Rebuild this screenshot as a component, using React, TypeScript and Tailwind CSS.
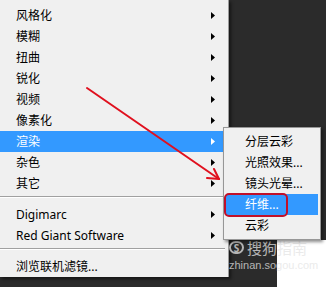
import React from 'react';

type MenuItem = { label: string; sub?: boolean; active?: boolean } | { sep: true };

const mainItems: MenuItem[] = [
  { label: '风格化', sub: true },
  { label: '模糊', sub: true },
  { label: '扭曲', sub: true },
  { label: '锐化', sub: true },
  { label: '视频', sub: true },
  { label: '像素化', sub: true },
  { label: '渲染', sub: true, active: true },
  { label: '杂色', sub: true },
  { label: '其它', sub: true },
  { sep: true },
  { label: 'Digimarc', sub: true },
  { label: 'Red Giant Software', sub: true },
  { sep: true },
  { label: '浏览联机滤镜...' },
];

const subItems = [
  { label: '分层云彩' },
  { label: '光照效果...' },
  { label: '镜头光晕...' },
  { label: '纤维...', active: true },
  { label: '云彩' },
];

const Caret = ({ white }: { white?: boolean }) => (
  <svg width="4" height="7" viewBox="0 0 4 7" className="shrink-0">
    <path d="M0 0 L4 3.5 L0 7 Z" fill={white ? '#ffffff' : '#000000'} />
  </svg>
);

export default function App() {
  return (
    <div className="relative w-[326px] h-[287px] overflow-hidden bg-[#2b2b2b] font-['Noto_Sans','Noto_Sans_CJK_SC',sans-serif] text-[12px] text-black">
      {/* main filter menu */}
      <div className="w-[229px] h-[277px] bg-[#f0f0f0] border-r border-[#9a9a9a] pt-[5px] flex flex-col shadow-[2px_2px_3px_rgba(0,0,0,0.5)]">
        {mainItems.map((item, i) =>
          'sep' in item ? (
            <div key={i} className="h-[10px] flex items-start pt-[2px] pr-[3px]">
              <div className="w-full border-t border-[#a0a0a0] border-b border-b-white" />
            </div>
          ) : (
            <div
              key={i}
              className={`h-[21px] flex items-center pl-[16px] pr-[10px] mr-[3px] ${
                item.active ? 'bg-[#3399ff] text-white' : ''
              }`}
            >
              <span className="flex-1 leading-none">{item.label}</span>
              {item.sub && <Caret white={item.active} />}
            </div>
          )
        )}
      </div>

      {/* desktop behind, bottom right */}
      <div className="absolute left-[277px] top-[240px] w-[49px] h-[47px] bg-white" />

      {/* watermark */}
      <div className="absolute left-[229px] top-[240px] flex flex-col text-[#e4e4e4]/75">
        <div className="flex items-center gap-[3px]">
          <div className="w-[15px] h-[13px] rounded-full border-2 border-[#e4e4e4]/75 flex items-center justify-center text-[10px] font-bold leading-none">
            S
          </div>
          <span className="text-[15px] leading-none font-['Noto_Sans_CJK_SC',sans-serif]">搜狗指南</span>
        </div>
        <span className="text-[11px] leading-none mt-[5px] font-['Liberation_Sans',sans-serif]">zhinan.sogou.com</span>
      </div>

      {/* render submenu */}
      <div className="absolute left-[223px] top-[127px] w-[98px] bg-[#f0f0f0] border border-[#979797] py-[3px] px-[2px] shadow-[2px_2px_3px_rgba(0,0,0,0.45)]">
        {subItems.map((item, i) => (
          <div
            key={i}
            className={`h-[21px] flex items-center pl-[19px] ${item.active ? 'bg-[#3399ff] text-white' : ''}`}
          >
            <span className="leading-none">{item.label}</span>
          </div>
        ))}
      </div>

      {/* annotations */}
      <div className="absolute left-[224px] top-[193px] w-[64px] h-[24px] rounded-[5px] border-2 border-[#c0102a]" />
      <svg className="absolute left-0 top-0" width="326" height="287" viewBox="0 0 326 287">
        <g stroke="#e0101e" strokeWidth="2" strokeLinecap="round" fill="none">
          <line x1="87" y1="88" x2="219" y2="179" />
          <line x1="219" y1="179" x2="207" y2="178" />
          <line x1="219" y1="179" x2="214" y2="169" />
        </g>
      </svg>
    </div>
  );
}
